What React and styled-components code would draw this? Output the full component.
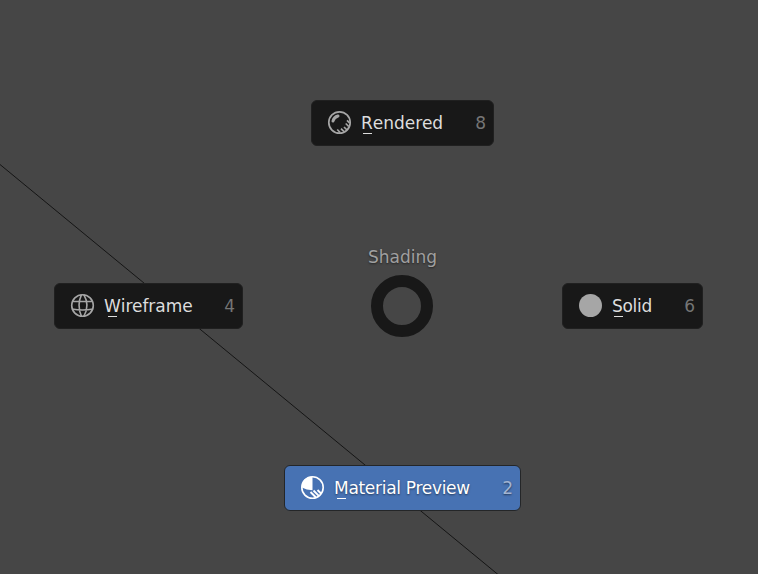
import React from "react";
import styled, { createGlobalStyle } from "styled-components";

const GlobalStyle = createGlobalStyle`
  body { margin: 0; background: #464646; overflow: hidden; }
`;

const Viewport = styled.main`
  position: relative;
  width: 758px;
  height: 574px;
  overflow: hidden;
  background: #464646;
  font-family: "DejaVu Sans", sans-serif;
  font-size: 17px;
  line-height: 20px;
`;

const Edge = styled.svg`
  position: absolute;
  inset: 0;
`;

const PieItem = styled.button`
  position: absolute;
  left: ${(p) => p.$x}px;
  top: ${(p) => p.$y}px;
  width: ${(p) => p.$width}px;
  height: 46px;
  box-sizing: border-box;
  display: flex;
  align-items: center;
  padding: 0 7px 0 15px;
  border: 1px solid ${(p) => (p.$active ? "#242628" : "#202020")};
  border-radius: 6px;
  background: ${(p) => (p.$active ? "#4772b3" : "#181818")};
  color: ${(p) => (p.$active ? "#ffffff" : "#dddddd")};
  font: inherit;
  text-shadow: ${(p) => (p.$active ? "0 1px 2px rgba(0,0,0,.5)" : "none")};
`;

const Icon = styled.svg`
  flex: none;
  width: 25px;
  height: 25px;
  margin: 0 9px 1px 0;
  color: ${(p) => (p.$active ? "#ffffff" : "#a6a6a6")};
`;

const Label = styled.span`
  flex: 1;
  text-align: left;
  white-space: nowrap;
  letter-spacing: ${(p) => p.$tracking}px;
`;

const AccessKey = styled.span`
  position: relative;
  &::after {
    content: "";
    position: absolute;
    left: ${(p) => p.$offset}px;
    top: 20px;
    width: 9px;
    height: 1.4px;
    background: currentColor;
  }
`;

const Shortcut = styled.span`
  color: ${(p) => (p.$active ? "#a2b4d2" : "#757575")};
`;

const PieCenter = styled.section`
  position: absolute;
  left: 352px;
  top: 247px;
  width: 100px;
  display: flex;
  flex-direction: column;
  align-items: center;
  gap: 8px;
`;

const Title = styled.span`
  padding-left: 1px;
  color: #a0a0a0;
  text-shadow: 0 1px 2px rgba(0, 0, 0, 0.5);
`;

const Ring = styled.div`
  box-sizing: border-box;
  width: 62px;
  height: 62px;
  border: 12px solid #181818;
  border-radius: 50%;
`;

const icons = {
  rendered: (
    <>
      <circle cx="12.5" cy="12.5" r="10.7" fill="none" stroke="currentColor" strokeWidth="1.7" />
      <path d="M6 11C6.6 8.2 8.3 6.7 11 6" fill="none" stroke="currentColor" strokeWidth="3" strokeLinecap="round" />
      <path d="M10.2 19.5l3 3M14 18.7l3 3M17 17l3 3M18.7 13.5l3 3M20 10.3l2.5 2.5" stroke="currentColor" strokeWidth="1.7" />
    </>
  ),
  wireframe: (
    <g fill="none" stroke="currentColor" strokeWidth="1.6">
      <circle cx="12.5" cy="12.5" r="10.8" />
      <path d="M2.8 8.5H22.2M1.9 16Q12.5 18 23.1 16M11.5 1.7Q6.5 12.5 11.5 23.3M13.8 1.7Q20.2 12.5 13.8 23.3" />
    </g>
  ),
  solid: <circle cx="12.5" cy="12.5" r="11.5" fill="currentColor" />,
  material: (
    <>
      <circle cx="12.5" cy="12.5" r="10.7" fill="none" stroke="currentColor" strokeWidth="1.6" />
      <path d="M12.5 1.5V15.2Q6.5 15 1.8 12.5C1.8 6 6 1.5 12.5 1.5Z" fill="currentColor" />
      <path d="M10.5 17l5.5 5.5M13.5 15.5l5.3 5.3M17.5 15l4 4" stroke="currentColor" strokeWidth="1.9" />
    </>
  ),
};

const items = [
  { icon: "rendered", label: "Rendered", shortcut: 8, x: 311, y: 100, width: 183, tracking: 0, offset: 2 },
  { icon: "wireframe", label: "Wireframe", shortcut: 4, x: 54, y: 283, width: 189, tracking: -0.05, offset: 4 },
  { icon: "solid", label: "Solid", shortcut: 6, x: 562, y: 283, width: 141, tracking: -0.3, offset: 2 },
  { icon: "material", label: "Material Preview", shortcut: 2, x: 284, y: 465, width: 237, tracking: -0.3, offset: 3, active: true },
];

export default function App() {
  return (
    <>
      <GlobalStyle />
      <Viewport>
        <Edge width="758" height="574" aria-hidden="true">
          <path d="M0 164.5L498 574.5" stroke="#151515" strokeWidth="1" />
        </Edge>
        <PieCenter>
          <Title>Shading</Title>
          <Ring />
        </PieCenter>
        {items.map((item) => (
          <PieItem key={item.icon} $x={item.x} $y={item.y} $width={item.width} $active={item.active}>
            <Icon viewBox="0 0 25 25" $active={item.active} aria-hidden="true">{icons[item.icon]}</Icon>
            <Label $tracking={item.tracking}>
              <AccessKey $offset={item.offset}>{item.label[0]}</AccessKey>
              {item.label.slice(1)}
            </Label>
            <Shortcut $active={item.active}>{item.shortcut}</Shortcut>
          </PieItem>
        ))}
      </Viewport>
    </>
  );
}
